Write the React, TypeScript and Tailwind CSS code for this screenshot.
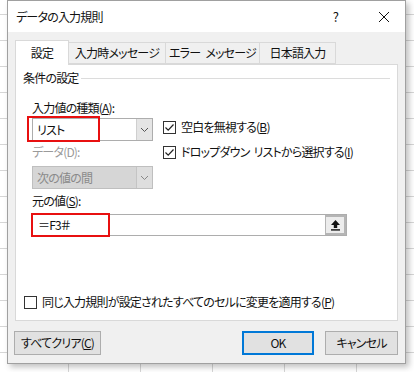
import React from "react";

function Check({ checked }: { checked: boolean }) {
  return (
    <span className="flex h-[13px] w-[13px] shrink-0 items-center justify-center border border-[#333] bg-white">
      {checked && (
        <svg width="11" height="11" viewBox="0 0 11 11">
          <path d="M1.5 5.5 L4.2 8.2 L9.5 2.5" fill="none" stroke="#222" strokeWidth="1.2" />
        </svg>
      )}
    </span>
  );
}

function Chevron({ color }: { color: string }) {
  return (
    <svg width="9" height="6" viewBox="0 0 9 6">
      <path d="M1 1 L4.5 4.5 L8 1" fill="none" stroke={color} strokeWidth="1" />
    </svg>
  );
}

export default function App() {
  return (
    <div className="relative h-[372px] w-[414px] overflow-hidden bg-white bg-[linear-gradient(to_right,#d6d6d6_1px,transparent_1px),linear-gradient(to_bottom,#d6d6d6_1px,transparent_1px)] bg-[size:72px_26px] bg-[position:-4px_14px] font-['Noto_Sans_CJK_JP',sans-serif] text-[12px] leading-[14px] tracking-[-0.8px] text-[#111] [font-feature-settings:'palt']">
      <div className="ml-[7px] flex h-[364px] w-[399px] flex-col border border-[#a0a0a0] bg-[#f0f0f0] shadow-[3px_3px_6px_rgba(0,0,0,0.25)]">
        {/* title bar */}
        <div className="flex h-[31px] shrink-0 items-center bg-white pl-[8px]">
          <span className="text-[12px]">データの入力規則</span>
          <span className="ml-auto mr-[40px] text-[13px]">?</span>
          <svg className="mr-[15px]" width="12" height="12" viewBox="0 0 12 12">
            <path d="M1 1 L11 11 M11 1 L1 11" stroke="#111" strokeWidth="1" />
          </svg>
        </div>

        <div className="flex flex-1 flex-col px-[7px] pt-[8px]">
          {/* tabs */}
          <div className="relative z-10 flex h-[24px] items-end">
            <div className="-mb-px flex h-[25px] w-[54px] items-center justify-center border border-b-0 border-[#d9d9d9] bg-white">
              設定
            </div>
            <div className="flex h-[22px] w-[97px] items-center justify-center border border-l-0 border-[#d9d9d9] bg-[#f0f0f0]">
              入力時メッセージ
            </div>
            <div className="flex h-[22px] w-[94px] items-center justify-center border border-l-0 border-[#d9d9d9] bg-[#f0f0f0]">
              エラー<span className="inline-block w-[5px]" />メッセージ
            </div>
            <div className="flex h-[22px] w-[76px] items-center justify-center border border-l-0 border-[#d9d9d9] bg-[#f0f0f0]">
              日本語入力
            </div>
          </div>

          {/* panel */}
          <div className="flex h-[257px] flex-col border border-[#d9d9d9] bg-white pl-[7px] pt-[6px]">
            <div className="flex items-center">
              <span>条件の設定</span>
              <span className="ml-[2px] mr-[7px] h-px flex-1 bg-[#dcdcdc]" />
            </div>

            <div className="pl-[9px]">
              <div className="mt-[16px]">
                入力値の種類(<span className="underline">A</span>):
              </div>
              <div className="flex">
                <div className="flex w-[121px] flex-col">
                  <div className="relative mt-[3px] flex h-[23px] border border-[#adadad] bg-white">
                    <span className="flex flex-1 items-center pl-[4px]">リスト</span>
                    <span className="flex w-[16px] items-center justify-center border-l border-[#cfcfcf] bg-[#e5e5e5]">
                      <Chevron color="#555" />
                    </span>
                    <span className="absolute left-[-6px] top-[-3px] h-[26px] w-[73px] border-2 border-[#e81010]" />
                  </div>
                  <div className="mt-[4px] text-[#9a9a9a]">データ(D):</div>
                  <div className="mt-[7px] flex h-[23px] border border-[#bfbfbf] bg-[#d6d6d6]">
                    <span className="flex flex-1 items-center pl-[4px] text-[#8a8a8a]">次の値の間</span>
                    <span className="flex w-[16px] items-center justify-center border-l border-[#c4c4c4] bg-[#dedede]">
                      <Chevron color="#888" />
                    </span>
                  </div>
                </div>
                <div className="ml-[10px] flex flex-col pt-[5px]">
                  <div className="flex items-center gap-[5px]">
                    <Check checked />
                    <span>
                      空白を無視する(<span className="underline">B</span>)
                    </span>
                  </div>
                  <div className="mt-[11px] flex items-center gap-[5px]">
                    <Check checked />
                    <span>
                      ドロップダウン<span className="inline-block w-[4px]" />リストから選択する(<span className="underline">I</span>)
                    </span>
                  </div>
                </div>
              </div>

              <div className="mt-[5px]">
                元の値(<span className="underline">S</span>):
              </div>
              <div className="relative mt-[6px] flex h-[22px] w-[315px] border border-[#adadad] bg-white">
                <span className="flex flex-1 items-center pl-[5px]">＝F3＃</span>
                <span className="flex w-[21px] items-center justify-center border-2 border-l border-[#b5b5b5] bg-[#ececec]">
                  <svg width="11" height="12" viewBox="0 0 11 12">
                    <path d="M5.5 1 L1 6 H3.8 V9 H7.2 V6 H10 Z" fill="#111" />
                    <rect x="1" y="10.2" width="9" height="1.4" fill="#111" />
                  </svg>
                </span>
                <span className="absolute left-[-2px] top-[-2px] h-[24px] w-[79px] border-2 border-[#e81010]" />
              </div>
            </div>

            <div className="mb-[11px] mt-auto flex items-center gap-[5px] pl-[1px]">
              <Check checked={false} />
              <span>
                同じ入力規則が設定されたすべてのセルに変更を適用する(<span className="underline">P</span>)
              </span>
            </div>
          </div>

          {/* buttons */}
          <div className="mt-[10px] flex">
            <div className="-ml-px flex h-[24px] w-[87px] items-center justify-center border border-[#adadad] bg-[#e1e1e1]">
              すべてクリア(<span className="underline">C</span>)
            </div>
            <div className="ml-auto flex h-[24px] w-[72px] items-center justify-center border-2 border-[#0078d7] bg-[#e1e1e1]">
              OK
            </div>
            <div className="ml-[11px] flex h-[24px] w-[73px] items-center justify-center border border-[#adadad] bg-[#e1e1e1]">
              キャンセル
            </div>
          </div>
        </div>
      </div>
    </div>
  );
}
